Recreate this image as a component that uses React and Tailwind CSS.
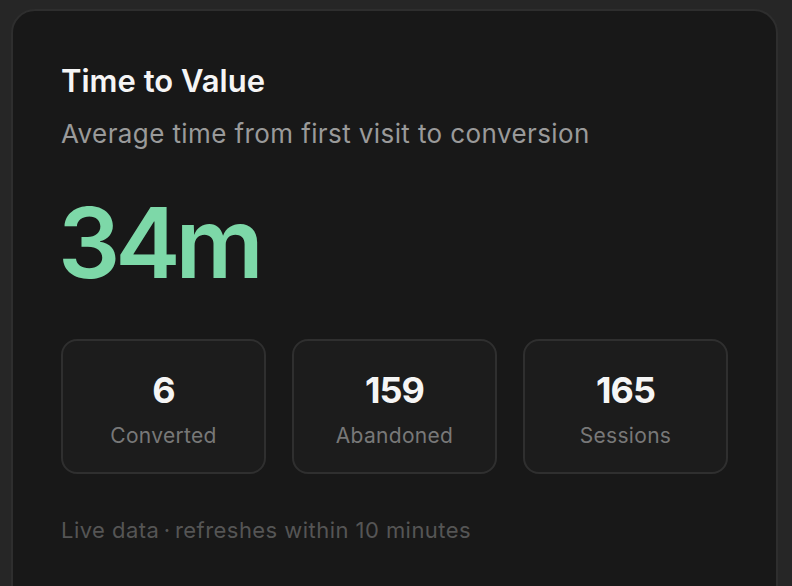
export default function App() {
  const stats = [
    { v: "6", l: "Converted" },
    { v: "159", l: "Abandoned" },
    { v: "165", l: "Sessions" },
  ];
  return (
    <div
      className="w-[792px] h-[586px] overflow-hidden bg-[#262626] pt-[9px] pl-[11px] pr-[14px]"
      style={{ fontFamily: "Inter, 'Noto Sans', sans-serif" }}
    >
      <div className="h-[620px] rounded-[24px] border-2 border-[#2e2e2e] bg-[#181818] px-[48px] pt-[52px]">
        <h1 className="text-[31px] leading-[36px] font-semibold text-[#f5f5f5]">
          Time to Value
        </h1>
        <p className="mt-[19px] text-[26px] leading-[32px] text-[#9a9a9a] tracking-[0.4px]">
          Average time from first visit to conversion
        </p>
        <div className="mt-[38px] -ml-[3px] text-[98px] leading-[110px] font-semibold text-[#7dd8a8] tracking-[-5px]">
          34m
        </div>
        <div className="mt-[41px] grid grid-cols-3 gap-[26px]">
          {stats.map((s) => (
            <div
              key={s.l}
              className="h-[135px] rounded-[16px] border-2 border-[#2f2f2f] bg-[#1c1c1c] flex flex-col items-center pt-[28px]"
            >
              <div className="text-[36px] leading-[42px] font-bold text-[#f5f5f5] tracking-[-1px]">
                {s.v}
              </div>
              <div className="mt-[12px] text-[21px] leading-[26px] text-[#787878] tracking-[0.3px]">
                {s.l}
              </div>
            </div>
          ))}
        </div>
        <p className="mt-[42px] text-[22px] leading-[28px] text-[#555555] tracking-[0.45px]">
          Live data{"\u2009·\u2009"}refreshes within 10 minutes
        </p>
      </div>
    </div>
  );
}
